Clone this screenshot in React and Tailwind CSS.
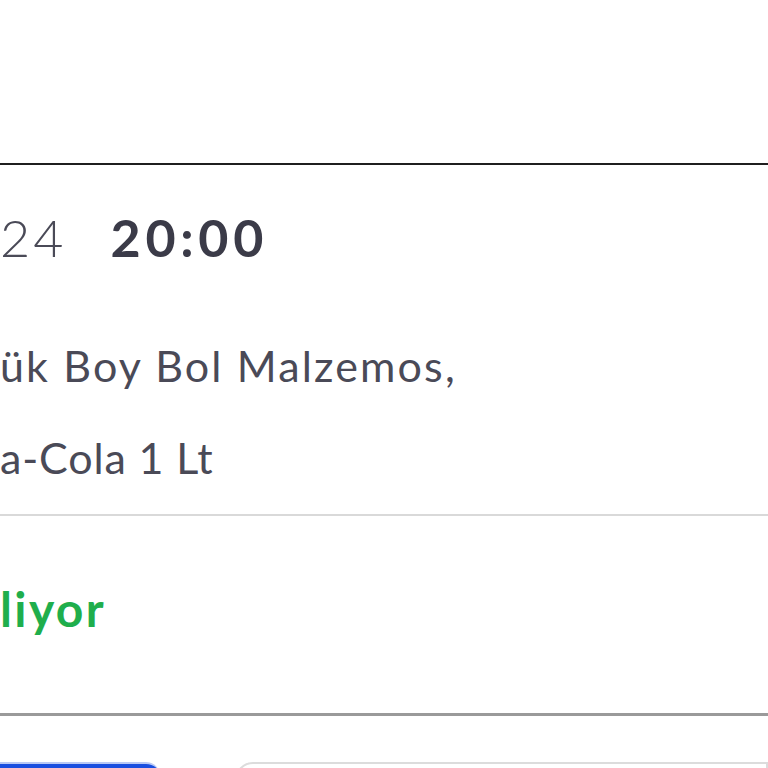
export default function App() {
  return (
    <div className="w-[768px] h-[768px] overflow-hidden bg-white font-['Lato',sans-serif] text-[#4a4a57]">
      <div className="h-[163px]" />
      <div className="h-[2px] bg-[#1f1f1f]" />

      <div className="pt-[46px] flex items-baseline gap-[44px] text-[52px] leading-none">
        <span className="font-light tracking-[0.06em]">24</span>
        <span className="font-bold tracking-[0.09em] text-[#3b3b48]">20:00</span>
      </div>

      <div className="mt-[57px] text-[43px] leading-[92px]">
        <div className="tracking-[0.05em]">ük Boy Bol Malzemos,</div>
        <div className="tracking-[0.02em]">a-Cola 1 Lt</div>
      </div>

      <div className="mt-[10px] h-[2px] bg-[#d9d9d9]" />

      <div className="pt-[69px] text-[48px] leading-none font-bold tracking-[0.05em] text-[#1fae4c]">
        liyor
      </div>

      <div className="mt-[80px] h-[3px] bg-[#9a9a9a]" />

      <div className="mt-[46px] flex gap-[75px]">
        <div className="w-[160px] h-[50px] rounded-tr-[14px] bg-[#1a4fe0] border-t-2 border-[#b9c9f5]" />
        <div className="flex-1 h-[50px] rounded-tl-[18px] border-2 border-[#dcdcdc] bg-white" />
      </div>
    </div>
  );
}
